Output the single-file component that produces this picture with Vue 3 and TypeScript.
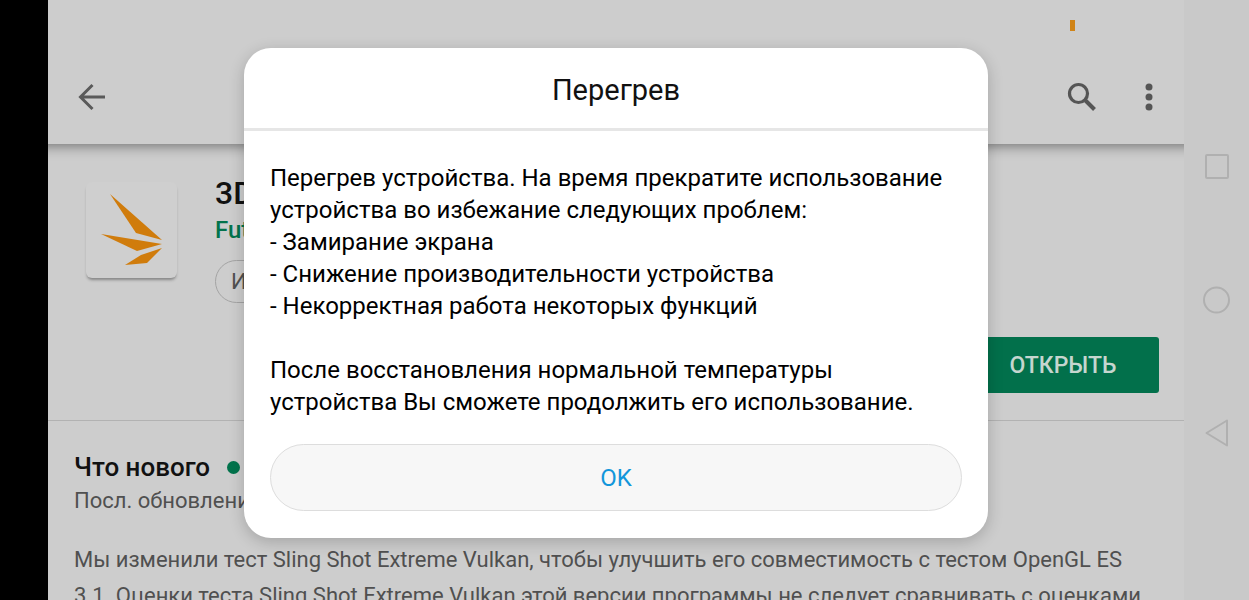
<script setup lang="ts">
import { ref } from 'vue'

const open = ref<boolean>(true)
const problems: string[] = [
  'Замирание экрана',
  'Снижение производительности устройства',
  'Некорректная работа некоторых функций',
]
</script>

<template>
  <div class="device">
    <div class="cutout"></div>

    <div class="app">
      <header class="appbar">
        <div class="status"><span class="battery"></span></div>
        <div class="toolbar">
          <button class="icon-btn" type="button" aria-label="Назад">
            <svg width="28" height="28" viewBox="0 0 28 28" fill="none" stroke="#5a5a5a" stroke-width="3">
              <path d="M27 14H3M14.500 2L2.500 14L14.500 26" />
            </svg>
          </button>
          <span class="spacer"></span>
          <button class="icon-btn" type="button" aria-label="Поиск">
            <svg width="30" height="30" viewBox="0 0 30 30" fill="none" stroke="#555">
              <circle cx="11.500" cy="11.500" r="9" stroke-width="3.200" />
              <path d="M18.500 18.500L27.500 27.500" stroke-width="4" />
            </svg>
          </button>
          <button class="icon-btn" type="button" aria-label="Ещё">
            <svg width="8" height="28" viewBox="0 0 8 28" fill="#555">
              <circle cx="4" cy="4" r="3.500" />
              <circle cx="4" cy="14" r="3.500" />
              <circle cx="4" cy="24" r="3.500" />
            </svg>
          </button>
        </div>
      </header>

      <section class="product">
        <div class="logo">
          <svg width="92" height="96" viewBox="0 0 92 96" fill="#d07c0c">
            <path d="M24 12L76 58L50 51Z" />
            <path d="M15 52L76 62L51 69Z" />
            <path d="M76 66L61 81L39 83L55 73Z" />
          </svg>
        </div>
        <div class="info">
          <h1>3DMark</h1>
          <a class="publisher" href="#">Futuremark</a>
          <a class="chip" href="#">Инструменты</a>
        </div>
        <button class="launch" type="button">ОТКРЫТЬ</button>
      </section>

      <section class="news">
        <h2>Что нового <span class="dot"></span></h2>
        <p class="updated">Посл. обновление</p>
        <p class="changes">
          Мы изменили тест Sling Shot Extreme Vulkan, чтобы улучшить его совместимость с тестом OpenGL ES<br>
          3.1. Оценки теста Sling Shot Extreme Vulkan этой версии программы не следует сравнивать с оценками
        </p>
      </section>

      <div v-if="open" class="overlay">
        <div class="dialog" role="alertdialog" aria-labelledby="dialog-title" aria-describedby="dialog-text">
          <h2 id="dialog-title" class="dialog-title">Перегрев</h2>
          <div class="dialog-body">
            <div id="dialog-text" class="message">
              <p>Перегрев устройства. На время прекратите использование устройства во избежание следующих проблем:</p>
              <p v-for="problem in problems" :key="problem">- {{ problem }}</p>
              <p class="after">После восстановления нормальной температуры<br>устройства Вы сможете продолжить его использование.</p>
            </div>
            <button class="ok" type="button" @click="open = false">OK</button>
          </div>
        </div>
      </div>
    </div>

    <nav class="navbar">
      <button class="icon-btn" type="button" aria-label="Недавние">
        <svg width="28" height="28" viewBox="0 0 28 28" fill="none" stroke="#b0b0b0" stroke-width="2">
          <rect x="3" y="2" width="22" height="23" rx="1" />
        </svg>
      </button>
      <button class="icon-btn" type="button" aria-label="Домой">
        <svg width="28" height="28" viewBox="0 0 28 28" fill="none" stroke="#b0b0b0" stroke-width="2">
          <circle cx="13.500" cy="14" r="12.500" />
        </svg>
      </button>
      <button class="icon-btn" type="button" aria-label="Назад">
        <svg width="28" height="28" viewBox="0 0 28 28" fill="none" stroke="#b0b0b0" stroke-width="2" stroke-linejoin="round">
          <path d="M24 1.500V26.500L3.500 14Z" />
        </svg>
      </button>
    </nav>
  </div>
</template>

<style>
body {
  margin: 0;
  background: #cdcdcd;
}
</style>

<style scoped>
.device {
  display: flex;
  height: 100vh;
  overflow: hidden;
  font-family: Roboto, "Noto Sans", sans-serif;
  color: #111;
  background: #cdcdcd;
}
h1, h2, p {
  margin: 0;
}
button {
  font-family: inherit;
  cursor: pointer;
}
a {
  text-decoration: none;
}
.cutout {
  flex: none;
  width: 48px;
  background: #000;
}
.app {
  position: relative;
  flex: 1;
  min-width: 0;
  overflow: hidden;
}
.appbar {
  position: relative;
  box-sizing: border-box;
  height: 144px;
  margin: 0 -16px;
  padding: 0 16px;
  background: #cdcdcd;
  box-shadow: 0 2px 12px rgba(0, 0, 0, 0.45);
}
.status {
  box-sizing: border-box;
  display: flex;
  justify-content: flex-end;
  height: 50px;
  padding: 20px 109px 0 0;
}
.battery {
  width: 5px;
  height: 11px;
  background: #d08418;
}
.toolbar {
  display: flex;
  align-items: center;
  gap: 48px;
  height: 93px;
  padding: 0 31px 0 30px;
}
.spacer {
  flex: 1;
}
.icon-btn {
  display: flex;
  padding: 0;
  border: 0;
  background: none;
}
.product {
  display: flex;
  gap: 38px;
  box-sizing: border-box;
  height: 277px;
  padding: 28px 25px 0 38px;
  border-bottom: 1px solid #b2b2b2;
}
.logo {
  flex: none;
  align-self: flex-start;
  margin-top: 10px;
  width: 91px;
  height: 96px;
  border-radius: 6px;
  background: #cfcfcf;
  box-shadow: 0 3px 3px -1px rgba(0, 0, 0, 0.35);
}
.info {
  display: flex;
  flex-direction: column;
  align-items: flex-start;
  flex: 1;
}
h1 {
  font-size: 32px;
  line-height: 42px;
  font-weight: 500;
}
.publisher {
  margin-bottom: 14px;
  font-size: 24px;
  line-height: 32px;
  font-weight: 500;
  color: #03734c;
}
.chip {
  box-sizing: border-box;
  height: 43px;
  padding: 0 15px;
  border: 1px solid #a4a4a4;
  border-radius: 22px;
  font-size: 22px;
  line-height: 42px;
  color: #505050;
}
.launch {
  align-self: flex-end;
  width: 192px;
  height: 56px;
  margin-bottom: 27px;
  padding: 0;
  border: 0;
  border-radius: 3px;
  background: #02704b;
  color: #c5d6cf;
  font-size: 23px;
  font-weight: 500;
}
.news {
  padding: 30px 26px 0;
  color: #505050;
}
.news h2 {
  display: flex;
  align-items: center;
  gap: 17px;
  font-size: 26px;
  line-height: 32px;
  font-weight: 500;
  color: #111;
}
.dot {
  width: 13px;
  height: 13px;
  border-radius: 50%;
  background: #02734c;
}
.updated {
  font-size: 22px;
  line-height: 36px;
}
.changes {
  margin-top: 23px;
  font-size: 22px;
  line-height: 36px;
}
.overlay {
  position: absolute;
  inset: 0;
  display: flex;
  align-items: center;
  justify-content: center;
  padding-bottom: 14px;
}
.dialog {
  width: 744px;
  border-radius: 27px;
  background: #fff;
  box-shadow: 0 4px 16px rgba(0, 0, 0, 0.2);
}
.dialog-title {
  padding-top: 4px;
  border-bottom: 3px solid #e6e6e6;
  font-size: 29px;
  line-height: 76px;
  font-weight: 400;
  text-align: center;
}
.dialog-body {
  padding: 31px 26px 27px;
}
.message {
  font-size: 24px;
  line-height: 32px;
  color: #000;
}
.after {
  margin-top: 32px;
}
.ok {
  display: block;
  width: 100%;
  height: 67px;
  margin-top: 26px;
  padding: 0;
  border: 1px solid #ddd;
  border-radius: 34px;
  background: #f7f7f7;
  color: #1296db;
  font-size: 24px;
}
.navbar {
  flex: none;
  display: flex;
  flex-direction: column;
  align-items: center;
  justify-content: center;
  gap: 105px;
  width: 65px;
  background: #c9c9c9;
}
</style>
